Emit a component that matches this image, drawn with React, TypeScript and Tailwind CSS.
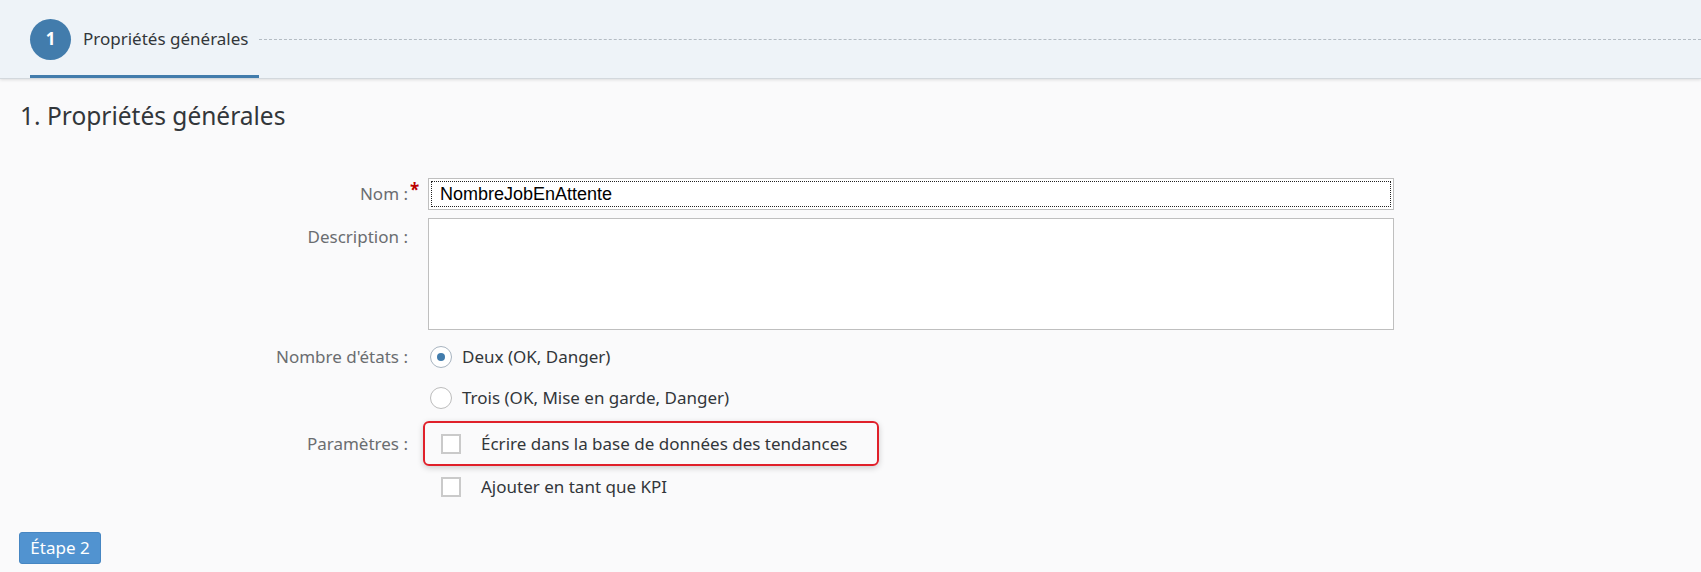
import React from "react";

function Label({ text, required }: { text: string; required?: boolean }) {
  return (
    <div className="w-[420px] shrink-0 flex justify-end items-center text-[17px] text-[#6a6d70]">
      <span>{text}</span>
      <span className="w-[12px] pl-[2px] text-[#bb0000] font-bold self-start leading-[24px]">{required ? "*" : ""}</span>
    </div>
  );
}

function Radio({ checked, label }: { checked?: boolean; label: string }) {
  return (
    <div className="flex items-center ml-[2px]">
      <div className={"w-[22px] h-[22px] rounded-full bg-white border flex items-center justify-center " + (checked ? "border-[#a8b4c0]" : "border-[#bcbcbc]")}>
        {checked && <div className="w-[8px] h-[8px] rounded-full bg-[#427cac]" />}
      </div>
      <span className="ml-[10px] text-[17px] text-[#32363a]">{label}</span>
    </div>
  );
}

function Check({ label }: { label: string }) {
  return (
    <div className="flex items-center">
      <div className="w-[20px] h-[20px] bg-white border-2 border-[#cacaca]" />
      <span className="ml-[20px] text-[17px] text-[#32363a]">{label}</span>
    </div>
  );
}

export default function App() {
  return (
    <div className="w-[1701px] h-[572px] overflow-hidden bg-[#fafafb] font-['Noto_Sans',sans-serif] text-[#32363a]">
      <div className="h-[79px] bg-[#eef3f8] flex items-stretch pl-[30px] border-b border-[#d3d8dd] shadow-[0_1px_3px_rgba(0,0,0,0.12)]">
        <div className="flex items-center pt-[3px] pr-[11px] border-b-[3px] border-[#427cac]">
          <div className="w-[41px] h-[41px] rounded-full bg-[#427cac] text-white font-bold text-[17px] flex items-center justify-center">1</div>
          <span className="ml-[12px] text-[17px] text-[#32363a]">Propriétés générales</span>
        </div>
        <div className="flex-1 self-center border-t border-dashed border-[#b4bcc4] mt-[1px]" />
      </div>

      <div className="pl-[20px] mt-[21px] text-[24.5px] leading-[32px] text-[#32363a]">1. Propriétés générales</div>

      <div className="mt-[46px] flex flex-col">
        <div className="flex h-[32px] gap-[8px]">
          <Label text="Nom :" required />
          <div className="w-[966px] h-[32px] bg-white border border-[#bfbfbf] p-[2px]">
            <div className="h-full border border-dotted border-[#222] flex items-center pl-[8px] font-['Liberation_Sans',sans-serif] text-[18px] text-black">NombreJobEnAttente</div>
          </div>
        </div>
        <div className="flex mt-[8px] gap-[8px]">
          <div className="w-[420px] shrink-0 flex justify-end pt-[7px] pr-[12px] text-[17px] leading-[24px] text-[#6a6d70] h-[112px]">Description :</div>
          <div className="w-[966px] h-[112px] bg-white border border-[#bfbfbf]" />
        </div>
        <div className="flex h-[41px] mt-[6px] gap-[8px]">
          <Label text="Nombre d'états :" />
          <Radio checked label="Deux (OK, Danger)" />
        </div>
        <div className="flex h-[41px] gap-[8px]">
          <div className="w-[420px] shrink-0" />
          <Radio label="Trois (OK, Mise en garde, Danger)" />
        </div>
        <div className="flex h-[45px] mt-[3px] gap-[8px]">
          <Label text="Paramètres :" />
          <div className="-ml-[5px] w-[456px] h-[45px] border-2 border-[#e0202a] rounded-[6px] shadow-[0_2px_6px_rgba(0,0,0,0.18)] flex items-center pl-[16px]">
            <Check label="Écrire dans la base de données des tendances" />
          </div>
        </div>
        <div className="flex h-[41px] gap-[8px]">
          <div className="w-[420px] shrink-0" />
          <div className="flex items-center pl-[13px]">
            <Check label="Ajouter en tant que KPI" />
          </div>
        </div>
      </div>

      <div className="mt-[25px] ml-[19px] w-[82px] h-[32px] rounded-[3px] bg-[#5193d0] border border-[#4686c2] text-white text-[17px] flex items-center justify-center">Étape 2</div>
    </div>
  );
}
